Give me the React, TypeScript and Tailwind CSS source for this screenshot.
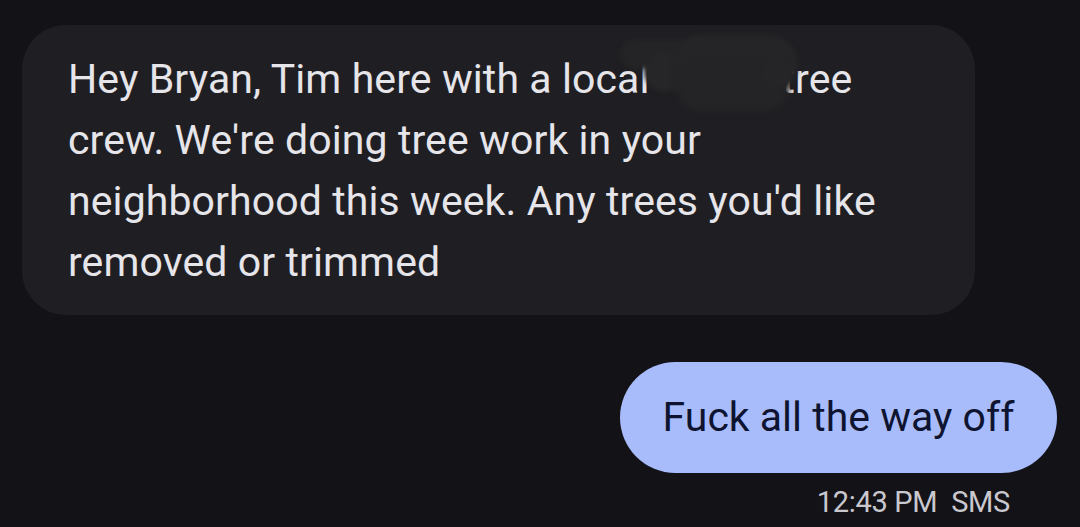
import React from 'react';

export default function App() {
  return (
    <div className="w-[1080px] h-[527px] bg-[#131217] overflow-hidden flex flex-col font-['Roboto',sans-serif]">
      {/* Incoming message */}
      <div className="pt-[25px] pl-[22px]">
        <div className="relative w-[953px] h-[290px] bg-[#1f1f23] rounded-[44px] pl-[46px] pt-[24px]">
          <p className="text-[41px] leading-[61px] text-[#e6e5ea] tracking-[0.1px]">
            Hey Bryan, Tim here with a local<span className="inline-block w-[132px]" />tree
            <br />
            crew. We're doing tree work in your
            <br />
            neighborhood this week. Any trees you'd like
            <br />
            removed or trimmed
          </p>
          {/* redaction smudge */}
          <div className="absolute left-[598px] top-[14px] w-[90px] h-[30px] rounded-full bg-[#242426] blur-[2px]" />
          <div className="absolute left-[622px] top-[26px] w-[100px] h-[40px] rounded-full bg-[#262628] blur-[2px]" />
          <div className="absolute left-[650px] top-[10px] w-[126px] h-[58px] rounded-[40px] bg-[#252527] blur-[2px]" />
          <div className="absolute left-[655px] top-[40px] w-[112px] h-[46px] rounded-full bg-[#242426] blur-[3px]" />
          <div className="absolute left-[740px] top-[30px] w-[28px] h-[34px] rounded-full bg-[#252527] blur-[1px]" />
        </div>
      </div>

      {/* Outgoing message */}
      <div className="flex justify-end pr-[23px] mt-[47px]">
        <div className="h-[111px] w-[437px] rounded-full bg-[#a8bcfb] flex items-center justify-center">
          <span className="text-[41px] text-[#0e1430] tracking-[0px]">Fuck all the way off</span>
        </div>
      </div>
      <div className="flex justify-end pr-[70px] mt-[12px]">
        <span className="text-[29px] leading-[34px] text-[#c9c8cf] tracking-[-0.3px]">
          12:43 PM&nbsp;&nbsp;SMS
        </span>
      </div>
    </div>
  );
}
